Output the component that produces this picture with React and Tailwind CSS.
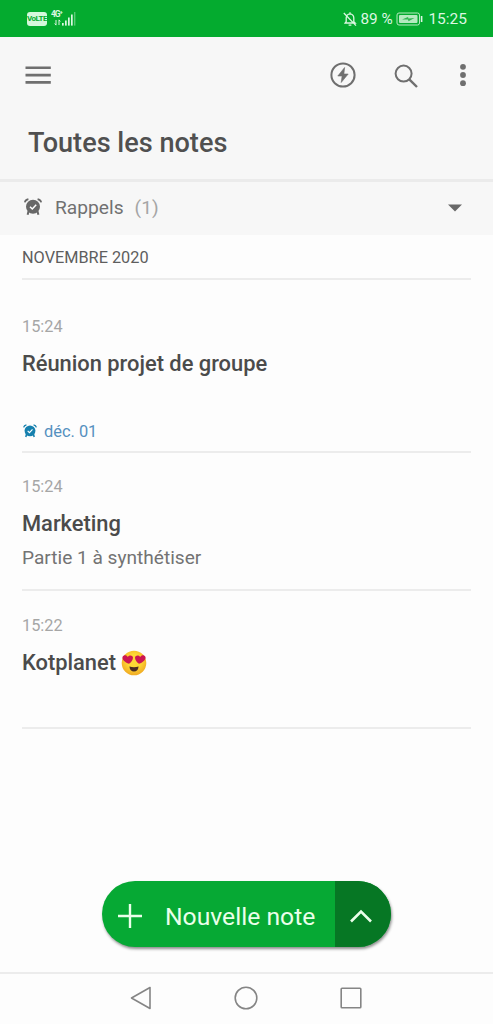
const notes = [
  {
    id: 1,
    time: '15:24',
    title: 'Réunion projet de groupe',
    reminder: 'déc. 01',
    height: 'h-[173px] pt-[35px]',
  },
  {
    id: 2,
    time: '15:24',
    title: 'Marketing',
    text: 'Partie 1 à synthétiser',
    height: 'h-[138px] pt-[22px]',
  },
  {
    id: 3,
    time: '15:22',
    title: 'Kotplanet',
    emoji: true,
    height: 'h-[138px] pt-[23px]',
  },
];

function AlarmIcon({ className }) {
  return (
    <svg viewBox="0 0 18 18" className={className}>
      <path d="M0.8 4.4 Q1.4 1.8 4.4 1.2 M17.2 4.4 Q16.6 1.8 13.6 1.2" fill="none" stroke="currentColor" strokeWidth="1.7" />
      <path d="M4.6 13 L3.6 16.8 M13.4 13 L14.4 16.8" stroke="currentColor" strokeWidth="2" />
      <circle cx="9" cy="8.8" r="7" fill="currentColor" />
      <path d="M6 8.8 L8.3 11 L12.2 6.8" fill="none" stroke="white" strokeWidth="1.5" />
    </svg>
  );
}

function HeartEyes() {
  return (
    <svg viewBox="0 0 26 26" className="h-[26px] w-[26px]" role="img" aria-label="😍">
      <defs>
        <radialGradient id="face" cx="50%" cy="42%" r="55%">
          <stop offset="0.5" stopColor="#fdd835" />
          <stop offset="1" stopColor="#f2ae25" />
        </radialGradient>
      </defs>
      <circle cx="13" cy="13" r="12.3" fill="url(#face)" />
      <path d="M8 13.8 C3.6 12.2 0.9 9.4 1.5 7 C2.4 4.6 5.6 4.5 6.8 6.9 C8.4 4.6 11.8 5.1 12 7.7 C12 10 9.8 12.4 8 13.8 Z" fill="#cc1652" />
      <path d="M18 13.8 C22.4 12.2 25.1 9.4 24.5 7 C23.6 4.6 20.4 4.5 19.2 6.9 C17.6 4.6 14.2 5.1 14 7.7 C14 10 16.2 12.4 18 13.8 Z" fill="#cc1652" />
      <path d="M8.4 16.4 Q13 18 17.6 16.4 Q17 21.4 13 21.4 Q9 21.4 8.4 16.4 Z" fill="#4a2d24" />
    </svg>
  );
}

function StatusBar() {
  return (
    <div className="flex h-[37px] items-center bg-[#04ab2f] pl-[27px] pr-[26px] text-[#dcf7e2]">
      <span className="mt-px flex h-[14px] w-[20px] items-center justify-center rounded-[3px] bg-[#d5f8dc] text-[8px] font-bold tracking-[-0.5px] text-[#04ab2f]">
        VoLTE
      </span>
      <svg viewBox="0 0 25 17" className="ml-1 h-[17px] w-[25px]" fill="currentColor">
        <text x="0" y="7" fontSize="8.5" fontWeight="700" fontFamily="Roboto, sans-serif" textLength="12">4G⁺</text>
        <path d="M5 10 v5 M3.7 13.5 L5 15.2 M8 15 v-5 M9.3 11.5 L8 9.8" stroke="currentColor" strokeWidth="1" fill="none" />
        <rect x="11" y="13" width="1.7" height="2.6" />
        <rect x="14" y="10.5" width="1.7" height="5.1" />
        <rect x="17" y="7.5" width="1.7" height="8.1" />
        <rect x="20" y="4.5" width="1.7" height="11.1" />
        <rect x="23" y="2" width="1.4" height="13.6" opacity="0.4" />
      </svg>

      <svg viewBox="0 0 14 16" className="ml-auto h-4 w-[14px]" fill="none" stroke="currentColor" strokeWidth="1.3">
        <path d="M2.2 12 L3.2 10.6 V6.8 Q3.4 3.2 7 2.8 Q10.6 3.2 10.8 6.8 V10.6 L12.2 12 Z M7 2.8 V1.2 M5.6 14.2 H8.4 M0.8 2 L13 14.6" />
      </svg>
      <span className="ml-[3px] mt-[2px] w-[33px] whitespace-nowrap text-[15.3px]">89 %</span>
      <svg viewBox="0 0 28 14" className="ml-[3px] h-[14px] w-[28px]">
        <rect x="1" y="1" width="22.5" height="12" rx="2" fill="none" stroke="#b5eac0" strokeWidth="1" />
        <rect x="3" y="3" width="18.5" height="8" rx="1" fill="#b5eac0" />
        <path d="M6 7.6 L12 5 L12.5 6.5 L18.5 6 L12.5 9.2 L12 7.6 Z" fill="#2fb650" />
        <path d="M25.6 4 v6" stroke="#dcf7e2" strokeWidth="1.6" />
      </svg>
      <span className="ml-1 mt-[2px] whitespace-nowrap text-[15.5px]">15:25</span>
    </div>
  );
}

function Toolbar() {
  return (
    <div className="flex h-[76px] items-center pl-[25px] pr-[27px] text-[#6f6f6f]">
      <svg viewBox="0 0 26 20" className="h-5 w-[26px]" stroke="currentColor" strokeWidth="2.6">
        <path d="M0.5 2.7 H25.8 M0.5 10.1 H25.8 M0.5 17.4 H25.8" />
      </svg>
      <svg viewBox="0 0 26 26" className="ml-auto h-[26px] w-[26px]">
        <circle cx="13" cy="13" r="11.6" fill="none" stroke="currentColor" strokeWidth="2" />
        <path d="M14.6 5.5 L7.8 14 H12.1 L11.2 20.5 L18.2 12 H13.9 Z" fill="currentColor" stroke="currentColor" strokeWidth="0.6" />
      </svg>
      <svg viewBox="0 0 24 24" className="ml-[38px] mt-px h-6 w-6" fill="none" stroke="currentColor" strokeWidth="2">
        <circle cx="9.6" cy="9.6" r="8" />
        <path d="M15.3 15.3 L23 23" strokeWidth="2.4" />
      </svg>
      <svg viewBox="0 0 6 24" className="ml-[42px] h-6 w-[6px]" fill="currentColor">
        <circle cx="3" cy="3.8" r="2.9" />
        <circle cx="3" cy="12" r="2.9" />
        <circle cx="3" cy="20.2" r="2.9" />
      </svg>
    </div>
  );
}

function Note({ note }) {
  return (
    <li className={`border-b-2 border-[#ececec] ${note.height}`}>
      <div className="h-6 text-[16.3px] leading-6 text-[#a6a6a6]">{note.time}</div>
      <div className="mt-[10px] flex h-[30px] items-center gap-[5px] text-[21.9px] font-medium tracking-[-0.02px] text-[#4b4b4b]">
        {note.title}
        {note.emoji && <HeartEyes />}
      </div>
      {note.text && (
        <p className="mt-[7px] text-[19.1px] leading-6 text-[#737373]">{note.text}</p>
      )}
      {note.reminder && (
        <div className="mt-[41px] flex h-6 items-center gap-[7px] text-[16.4px] text-[#5590bf]">
          <AlarmIcon className="mb-[3px] ml-px h-[14px] w-[14px] text-[#1680ae]" />
          {note.reminder}
        </div>
      )}
    </li>
  );
}

function NewNoteButton() {
  return (
    <div className="mx-auto flex h-[66px] w-[289px] overflow-hidden rounded-full bg-[#06a934] text-[#eaffea] shadow-[1px_2px_3px_rgba(0,0,0,0.45)]">
      <button className="flex flex-1 items-center pl-[15px] text-[24.7px]">
        <svg viewBox="0 0 26 26" className="mt-[3px] h-[26px] w-[26px]" stroke="currentColor" strokeWidth="2.4">
          <path d="M1 13 H25 M13 1 V25" />
        </svg>
        <span className="ml-[22px] mt-[5px] whitespace-nowrap">Nouvelle note</span>
      </button>
      <button className="flex w-[56px] items-center justify-center bg-[#067724]">
        <svg viewBox="0 0 24 14" className="mr-[5px] mt-[3px] h-[14px] w-6" fill="none" stroke="currentColor" strokeWidth="2.6">
          <path d="M2 12.5 L12 2.5 L22 12.5" />
        </svg>
      </button>
    </div>
  );
}

function NavBar() {
  return (
    <div className="flex h-[52px] items-center border-t-2 border-[#ececec] pb-[2px] pl-[130px] text-[#858585]">
      <svg viewBox="0 0 22 24" className="h-6 w-[22px]" fill="none" stroke="currentColor" strokeWidth="1.6" strokeLinejoin="round">
        <path d="M1.5 12 L20 1.5 V22.5 Z" />
      </svg>
      <svg viewBox="0 0 24 24" className="ml-[82px] h-6 w-6" fill="none" stroke="currentColor" strokeWidth="1.6">
        <circle cx="12" cy="12" r="10.8" />
      </svg>
      <svg viewBox="0 0 22 22" className="ml-[82px] h-[22px] w-[22px]" fill="none" stroke="currentColor" strokeWidth="1.6">
        <rect x="1.2" y="1.2" width="19.6" height="19.6" rx="0.8" />
      </svg>
    </div>
  );
}

export default function App() {
  return (
    <div className="flex h-[1024px] w-[493px] flex-col overflow-hidden bg-[#fdfdfd] font-['Roboto',sans-serif]">
      <StatusBar />

      {/* Header */}
      <header className="h-[145px] border-b-[3px] border-[#ebebeb] bg-[#f7f7f7]">
        <Toolbar />
        <h1 className="pl-7 text-[27.1px] leading-[60px] font-medium text-[#505050]">Toutes les notes</h1>
      </header>

      {/* Reminders */}
      <div className="flex h-[53px] items-center bg-[#f7f7f7] pl-6 pr-[31px] text-[19.2px]">
        <AlarmIcon className="mb-1 h-[18px] w-[18px] text-[#686868]" />
        <span className="ml-[13px] text-[#717171]">Rappels</span>
        <span className="ml-[11px] text-[#a5a5a5]">(1)</span>
        <svg viewBox="0 0 14 8" className="mb-[2px] ml-auto h-2 w-[14px]" fill="#696969">
          <path d="M0 0.5 H14 L7 7.5 Z" />
        </svg>
      </div>

      <main className="flex-1 px-[22px]">
        <h2 className="h-[45px] border-b-2 border-[#ececec] text-[16.3px] leading-[45px] text-[#5e5e5e]">NOVEMBRE 2020</h2>
        <ul>
          {notes.map((note) => (
            <Note key={note.id} note={note} />
          ))}
        </ul>
      </main>

      <div className="pb-[25px]">
        <NewNoteButton />
      </div>
      <NavBar />
    </div>
  );
}
